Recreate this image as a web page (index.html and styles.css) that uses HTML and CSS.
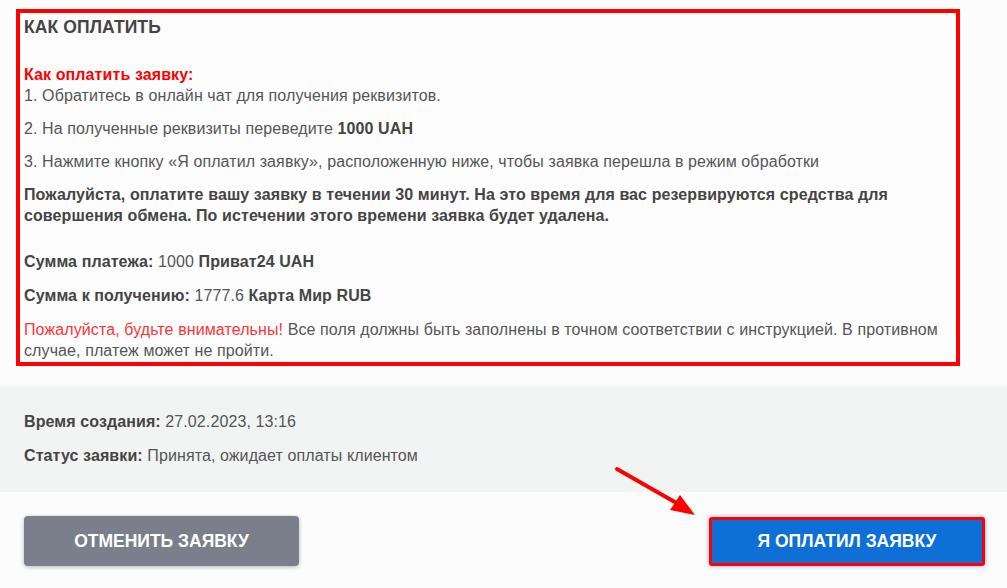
FILE: index.html
```html
<!DOCTYPE html>
<html lang="ru">
<head>
<meta charset="utf-8">
<title>Как оплатить</title>
<link rel="stylesheet" href="styles.css">
</head>
<body>
<div class="page">
  <section class="card">
    <h2 class="title">КАК ОПЛАТИТЬ</h2>
    <p class="steps"><strong class="red">Как оплатить заявку:</strong><br>1. Обратитесь в онлайн чат для получения реквизитов.</p>
    <p>2. На полученные реквизиты переведите <strong>1000 UAH</strong></p>
    <p>3. Нажмите кнопку «Я оплатил заявку», расположенную ниже, чтобы заявка перешла в режим обработки</p>
    <p class="notice"><strong>Пожалуйста, оплатите вашу заявку в течении 30 минут. На это время для вас резервируются средства для совершения обмена. По истечении этого времени заявка будет удалена.</strong></p>
    <p class="sum"><strong>Сумма платежа:</strong> 1000 <strong>Приват24 UAH</strong></p>
    <p class="sum"><strong>Сумма к получению:</strong> 1777.6 <strong>Карта Мир RUB</strong></p>
    <p class="last"><span class="warn">Пожалуйста, будьте внимательны!</span> Все поля должны быть заполнены в точном соответствии с инструкцией. В противном случае, платеж может не пройти.</p>
  </section>

  <section class="info">
    <p><strong>Время создания:</strong> 27.02.2023, 13:16</p>
    <p><strong>Статус заявки:</strong> Принята, ожидает оплаты клиентом</p>
  </section>

  <div class="actions">
    <button class="btn btn-cancel" type="button">ОТМЕНИТЬ ЗАЯВКУ</button>
    <button class="btn btn-paid" type="button">Я ОПЛАТИЛ ЗАЯВКУ</button>
  </div>

  <svg class="arrow" width="90" height="56" viewBox="0 0 90 56" aria-hidden="true">
    <line x1="3" y1="3" x2="66" y2="39" stroke="#ff0000" stroke-width="4" stroke-linecap="round"/>
    <polygon points="81,49 56,44 66,29" fill="#ff0000"/>
  </svg>
</div>
</body>
</html>
```

FILE: styles.css
```css
* { box-sizing: border-box; }

html, body {
  margin: 0;
  padding: 0;
  background: #fcfcfc;
}

body {
  font-family: "Liberation Sans", Arial, sans-serif;
  font-size: 16px;
  line-height: 21px;
  letter-spacing: 0.1px;
  color: #555;
}

.page {
  position: relative;
  width: 1007px;
  height: 588px;
  overflow: hidden;
  padding-top: 9px;
}

strong { color: #444; font-weight: bold; }

.card {
  margin-left: 16px;
  width: 944px;
  border: 4px solid #ff0000;
  padding: 4px 4px 1px 4px;
  background: #fdfdfd;
}

.card p { margin: 0 0 12px; }
.card p.sum { margin-bottom: 13px; }
.card p.last { margin-bottom: 0; }
.card p.notice { margin-bottom: 25px; }

.title {
  margin: 0 0 26px;
  font-size: 17.5px;
  line-height: 21px;
  font-weight: bold;
  color: #444;
}

.red { color: #ff0000; }
.warn { color: #ff3535; }

.info {
  margin-top: 20px;
  background: #f1f4f3;
  padding: 25px 24px 26px;
}

.info p { margin: 0 0 13px; }
.info p:last-child { margin-bottom: 0; }

.actions {
  margin-top: 24px;
  display: flex;
  justify-content: space-between;
  padding: 0 22px 0 24px;
}

.btn {
  height: 50px;
  width: 275px;
  border: 0;
  border-radius: 4px;
  font-family: "Liberation Sans", Arial, sans-serif;
  font-size: 17.5px;
  font-weight: bold;
  color: #fff;
  cursor: pointer;
  padding: 0;
}

.btn-cancel {
  background: #7a7f8b;
  box-shadow: 0 1px 4px rgba(0, 0, 0, 0.28);
}

.btn-paid {
  width: 276px;
  margin-top: 1px;
  height: 49px;
  background: #0e6fd6;
  border: 3px solid #ff0000;
  border-radius: 3px;
  box-shadow: 0 0 4px rgba(14, 80, 200, 0.55);
}

.arrow {
  position: absolute;
  left: 614px;
  top: 466px;
}
```
